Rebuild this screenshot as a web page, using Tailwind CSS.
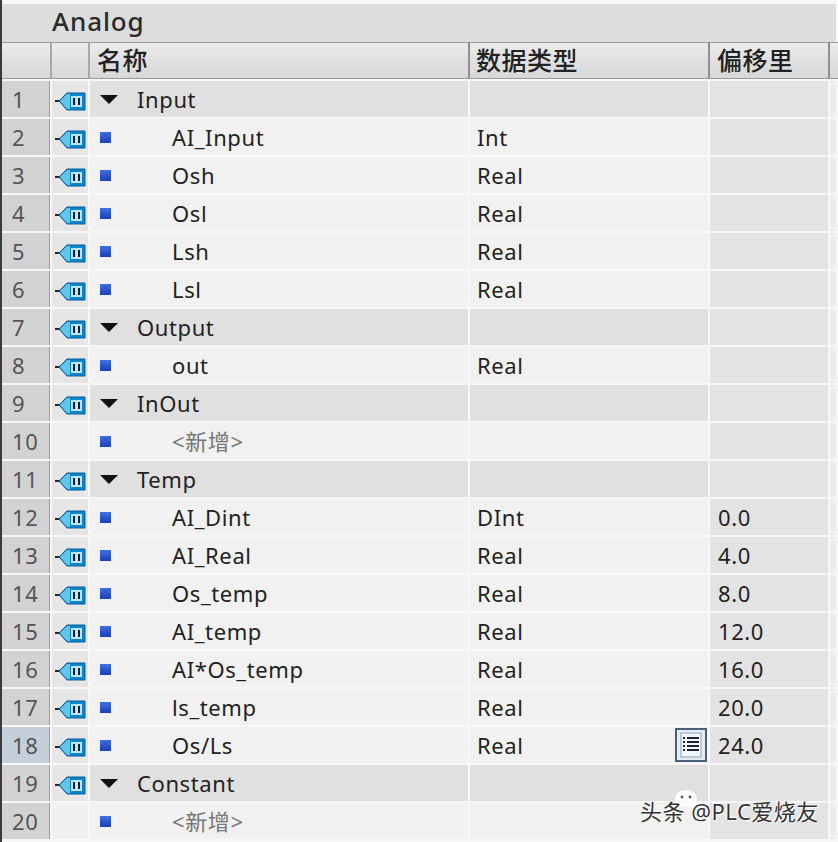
<!DOCTYPE html>
<html lang="en">
<head>
  <meta charset="UTF-8">
  <title>Analog</title>
  <script src="https://cdn.jsdelivr.net/npm/@tailwindcss/browser@4"></script>
</head>
<body class="bg-[#f7f7f7]">
  <div class="relative w-[838px] h-[842px] overflow-hidden pt-[4px] border-l-2 border-[#3a3a3a] font-['Noto_Sans','Noto_Sans_CJK_SC',sans-serif] text-[22px] text-[#222]">
    <!-- title -->
    <div class="h-[38px] mr-[2px] bg-[#dcdddc] pl-[50px] text-[26px] leading-[34px] font-medium text-[#2a2a2a] tracking-[0.9px]">Analog</div>

    <!-- header -->
    <div class="grid grid-cols-[48px_2px_36px_2px_378px_2px_238px_2px_118px_2px_6px] h-[37px] border-t border-b border-[#9a9a9a] bg-linear-to-b from-[#ececec] via-[#e0e0e0] to-[#d8d8d8]">
      <div></div><div class="bg-[#a8a8a8]"></div><div></div><div class="bg-[#a8a8a8]"></div>
      <div class="pl-[7px] leading-[35px] text-[25px] tracking-[0.5px] font-medium text-[#222]">名称</div>
      <div class="bg-[#8f8f8f]"></div>
      <div class="pl-[6px] leading-[35px] text-[25px] tracking-[0.5px] font-medium text-[#222]">数据类型</div>
      <div class="bg-[#8f8f8f]"></div>
      <div class="pl-[7px] leading-[35px] text-[25px] tracking-[0.5px] font-medium text-[#222]">偏移里</div>
      <div class="bg-[#8f8f8f]"></div><div></div>
    </div>

    <div id="rows" class="pt-[2px]"></div>

    <!-- watermark -->
    <svg class="absolute left-[670px] top-[789px]" width="28" height="18" viewBox="0 0 28 18">
      <ellipse cx="14" cy="10" rx="11" ry="9" fill="#fff"/>
      <circle cx="10" cy="8" r="1.4" fill="#555"/><circle cx="18" cy="8" r="1.4" fill="#555"/>
    </svg>
    <div class="absolute left-[638px] top-[796px] text-[22px] tracking-[0.5px] leading-[30px] text-[#333] [text-shadow:1px_1px_1px_#fff,-1px_-1px_1px_#fff]">头条 @PLC爱烧友</div>
  </div>

  <script>
    const rows = [
      { n: "Input", section: true, tag: true },
      { n: "AI_Input", t: "Int", tag: true },
      { n: "Osh", t: "Real", tag: true },
      { n: "Osl", t: "Real", tag: true },
      { n: "Lsh", t: "Real", tag: true },
      { n: "Lsl", t: "Real", tag: true },
      { n: "Output", section: true, tag: true },
      { n: "out", t: "Real", tag: true },
      { n: "InOut", section: true, tag: true },
      { n: "<新增>", add: true },
      { n: "Temp", section: true, tag: true },
      { n: "AI_Dint", t: "DInt", o: "0.0", tag: true },
      { n: "AI_Real", t: "Real", o: "4.0", tag: true },
      { n: "Os_temp", t: "Real", o: "8.0", tag: true },
      { n: "AI_temp", t: "Real", o: "12.0", tag: true },
      { n: "AI*Os_temp", t: "Real", o: "16.0", tag: true },
      { n: "ls_temp", t: "Real", o: "20.0", tag: true },
      { n: "Os/Ls", t: "Real", o: "24.0", tag: true, selected: true },
      { n: "Constant", section: true, tag: true },
      { n: "<新增>", add: true },
    ];

    const tagIcon = `<svg class="mt-[3px]" width="32" height="20" viewBox="0 0 32 20">
      <path d="M1 10H6" stroke="#111" stroke-width="1.8"/>
      <path d="M5 10L13 2H31V19H13Z" fill="#0b86cc" stroke="#0a5f9c"/>
      <path d="M6 10L13 3H16V18H13Z" fill="#63c4ea"/>
      <rect x="17" y="5" width="11" height="11" fill="#bfe4f4"/>
      <rect x="19" y="7" width="2" height="7" fill="#123"/><rect x="24" y="7" width="2" height="7" fill="#123"/>
    </svg>`;
    const arrow = `<svg width="18" height="9" viewBox="0 0 18 9"><path d="M0 0H18L9 9Z" fill="#111"/></svg>`;
    const square = `<div class="w-[11px] h-[11px] ml-[9px] bg-linear-to-b from-[#3f6fe0] to-[#1a3fb8]"></div>`;
    const listBtn = `<svg class="absolute right-[1px] top-[1px]" width="32" height="34" viewBox="0 0 32 34">
      <rect x="1" y="1" width="30" height="32" fill="#e6ecf6" stroke="#4a5f78" stroke-width="2"/>
      <rect x="6" y="5" width="20" height="24" fill="#f2f5fa" stroke="#8fa0b8"/>
      <path d="M8 10h2M8 14h2M8 18h2M8 22h2M12 10h12M12 14h12M12 18h12M12 22h12" stroke="#223" stroke-width="2"/>
    </svg>`;
    const esc = (s) => s.replace(/</g, "&lt;").replace(/>/g, "&gt;");

    document.getElementById("rows").innerHTML = rows.map((r, i) => {
      const mainBg = r.section ? "bg-[#dfe0df]" : "bg-[#f1f1f1]";
      const numBg = r.selected ? "bg-[#c4cfd9]" : "bg-[#d2d2d2]";
      const iconBg = r.tag ? "bg-[#e6e6e6]" : "bg-[#f0f0f0]";
      const name = r.section
        ? `<div class="flex items-center"><span class="ml-[9px] mr-[19px] flex">${arrow}</span>${r.n}</div>`
        : `<div class="flex items-center">${square}<span class="ml-[61px] ${r.add ? "text-[#777]" : ""}">${esc(r.n)}</span></div>`;
      return `<div class="grid grid-cols-[48px_2px_36px_2px_378px_2px_238px_2px_118px_2px_6px] h-[38px] pb-[2px] leading-[36px] tracking-[0.6px]">
        <div class="${numBg} border-r border-[#9c9c9c] pl-[10px] text-[#555]">${i + 1}</div>
        <div></div>
        <div class="${iconBg} flex items-center justify-center">${r.tag ? tagIcon : ""}</div>
        <div></div>
        <div class="${mainBg} flex items-center pl-[1px]">${name}</div>
        <div></div>
        <div class="${mainBg} relative pl-[7px]">${r.t || ""}${r.selected ? listBtn : ""}</div>
        <div></div>
        <div class="bg-[#e3e3e3] pl-[8px]">${r.o || ""}</div>
        <div></div>
        <div class="bg-[#ededed]"></div>
      </div>`;
    }).join("");
  </script>
</body>
</html>
